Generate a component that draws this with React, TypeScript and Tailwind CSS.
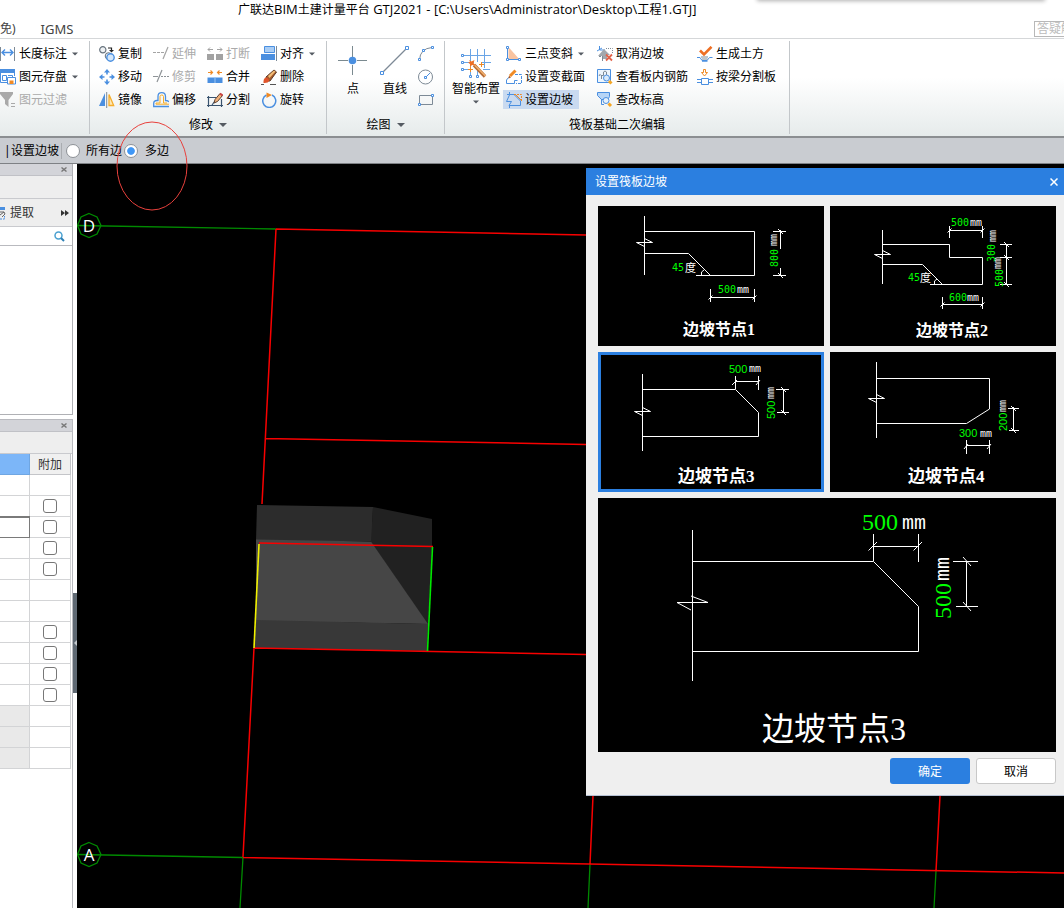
import { useState, type ReactNode } from "react";

const BLUE = "#4a8fe0";
const SLATE = "#7d8a96";
const ORANGE = "#f08a24";

function Icon({ children, size = 16 }: { children: ReactNode; size?: number }) {
  return (
    <svg width={size} height={size} viewBox={`0 0 ${size} ${size}`} fill="none" className="shrink-0" aria-hidden="true">
      {children}
    </svg>
  );
}

function Caret({ small = false }: { small?: boolean }) {
  return (
    <svg width={small ? 6 : 8} height="4" viewBox="0 0 8 4" className="shrink-0" aria-hidden="true">
      <path d="M0 0H8L4 4Z" fill="#555b62" />
    </svg>
  );
}

const icons = {
  dimension: (
    <Icon>
      <path d="M.5 1V15M14.5 1V15" stroke={SLATE} />
      <path d="M2 6.5H13M5 3.5L2 6.5L5 9.5M10 3.5L13 6.5L10 9.5" stroke={BLUE} strokeWidth="1.4" />
    </Icon>
  ),
  store: (
    <Icon>
      <path d="M0 0H15V4H0Z" fill={BLUE} />
      <path d="M.5 3V13.5H7M14.5 3V7M2.5 6.5H6.5V11.5H2.5ZM8 6.5H12.5V8" stroke={BLUE} />
      <path d="M7.5 8.500H15.500V15H7.500Z" fill="#fff" stroke={BLUE} />
      <path d="M9.500 11.500H13.500V15H9.500Z" fill={ORANGE} />
    </Icon>
  ),
  filter: (
    <Icon>
      <path d="M0 0H13V2L8.5 8V15L5 12V8L0 2Z" fill="#a9a9a9" />
      <path d="M11 11.5H15M11 14.5H15" stroke="#a9a9a9" />
    </Icon>
  ),
  copy: (
    <Icon>
      <circle cx="3.8" cy="3.8" r="3.1" stroke="#66727d" strokeWidth="1.2" fill="#eef1f3" />
      <circle cx="9.500" cy="10" r="3.300" stroke="#66727d" fill="#eef1f3" />
      <circle cx="11.500" cy="11.500" r="3.700" stroke={BLUE} strokeWidth="1.400" fill="#d4e7fb" />
      <path d="M9 2H12.5V4" stroke="#222" strokeWidth="1.2" />
      <path d="M10 4H15L12.500 6.500Z" fill="#222" />
    </Icon>
  ),
  move: (
    <Icon>
      <path d="M8 0L11 3.5H5ZM8 16L11 12.5H5ZM0 8L3.5 5V11ZM16 8L12.5 5V11Z" fill={BLUE} />
      <path d="M8 3V5.500M8 10.500V13M3 8H5.500M10.500 8H13" stroke={BLUE} strokeWidth="1.6" />
    </Icon>
  ),
  mirror: (
    <Icon>
      <path d="M6 1V14H0Z" fill={BLUE} />
      <path d="M7.7 0V16" stroke={SLATE} />
      <path d="M10 2.5V13.5H14.7Z" fill="#fde7b5" stroke="#f5ad2b" strokeWidth="1.3" />
    </Icon>
  ),
  extend: (
    <Icon>
      <path d="M0 6.5H3M4 6.5H7M8 6.5H11" stroke="#a4a4a4" />
      <path d="M15 1L10 13" stroke="#a4a4a4" strokeWidth="1.2" />
    </Icon>
  ),
  trim: (
    <Icon>
      <path d="M0 7.5H5M8 7.5H10M11 7.5H13M14 7.5H16" stroke="#8e9397" />
      <path d="M9 1L4 13" stroke="#8e9397" strokeWidth="1.2" />
    </Icon>
  ),
  offset: (
    <Icon>
      <path d="M16 14.5H.7V11.5Q.7 8.500 4 8.500H5V4.5Q5 .7 8.700 .7T12.500 4.500V8.500Q15 8.500 16 10" stroke={BLUE} strokeWidth="1.3" />
      <path d="M16 12.200H3V11H7V4.500Q7 3 8.700 3T10.500 4.500V11H14" stroke="#f5ad2b" />
    </Icon>
  ),
  breakApart: (
    <Icon>
      <path d="M0 8H7V14H0ZM9 8H16V14H9Z" fill="#a2a2a2" />
      <path d="M1 3.500H6M3 1.500L1 3.500L3 5.500M10 3.500H15M13 1.500L15 3.500L13 5.500" stroke="#a2a2a2" />
    </Icon>
  ),
  merge: (
    <Icon>
      <path d="M.5 8.500H15.500V14H.5Z" fill={BLUE} />
      <path d="M8 8V14" stroke="#9cc6f3" />
      <path d="M1 3.500H5.500M3.500 1.500L5.500 3.500L3.500 5.500M15 3.500H10.500M12.500 1.500L10.500 3.500L12.500 5.500" stroke={ORANGE} strokeWidth="1.200" />
    </Icon>
  ),
  split: (
    <Icon>
      <path d="M1.500 4V15M14.500 7V15M0 5.500H9M0 13.500H16M5 13L8 9" stroke="#39536e" strokeWidth="1.200" />
      <path d="M7 11L8 7.500L13 1.500L15.500 3.500L10.500 9.500Z" fill="#f2b27a" stroke="#5a4032" />
      <path d="M13 1.500L15.500 3.500" stroke="#c44" strokeWidth="2" />
    </Icon>
  ),
  align: (
    <Icon>
      <path d="M3.500 .5H13.500V6.500H3.500Z" fill="#a9cdf5" stroke={BLUE} />
      <path d="M0 8H14V14H0Z" fill={BLUE} />
      <path d="M15.500 0V15" stroke={SLATE} />
    </Icon>
  ),
  erase: (
    <Icon>
      <path d="M5 8L13 1L15.500 3L9 12L6 12Z" fill="#a85b2c" stroke="#5c3a26" />
      <path d="M7 7L13 1.500L14.500 2.500L8.500 9Z" fill="#f3bd76" />
      <path d="M2.500 12Q3 8 6 8.500L8.500 11.500Q7 14.500 2.500 14Z" fill="#e0542b" />
      <path d="M0 15.500H3M9 15.500H15" stroke="#555" />
    </Icon>
  ),
  rotate: (
    <Icon>
      <path d="M5.500 3A6.500 6.500 0 1 0 11 3" stroke={BLUE} strokeWidth="1.500" />
      <path d="M5.500 .5L11 3L5.500 6Z" fill={ORANGE} />
    </Icon>
  ),
  arc: (
    <Icon>
      <path d="M1.500 14Q2 2.500 14 1.500" stroke={SLATE} />
      <path d="M.5 12.500H2.500V14.500H.5ZM4.500 3.500H6.500V5.500H4.500ZM13.500 .5H15.500V2.500H13.500Z" fill="#fff" stroke={BLUE} />
    </Icon>
  ),
  circle: (
    <Icon>
      <circle cx="7.500" cy="8" r="7" stroke={SLATE} />
      <path d="M8 8L12 4" stroke={BLUE} />
      <path d="M6.500 7.500H8.500V9.500H6.500Z" fill="#fff" stroke={BLUE} />
    </Icon>
  ),
  rect: (
    <Icon>
      <path d="M1.500 3.500H14.500V12.500H1.500Z" stroke={SLATE} />
      <path d="M.5 11.500H2.500V13.500H.5ZM13.500 2.500H15.500V4.500H13.500Z" fill="#fff" stroke={BLUE} />
    </Icon>
  ),
  slope: (
    <Icon>
      <path d="M2.500 1V13.500H13.500Z" fill="#f9c3a0" />
      <path d="M1.500 2V13.500H14" stroke={BLUE} />
      <path d="M.5 .5H2.500V2.500H.5ZM.5 12.500H2.500V14.500H.5ZM12.500 12.500H14.500V14.500H12.500Z" fill="#fff" stroke={BLUE} />
    </Icon>
  ),
  section: (
    <Icon>
      <path d="M4 8.500H2.500L.5 11V14.500H8.500V11.500H11.500" stroke={BLUE} />
      <path d="M9 5.500H15.500V14.500H10" stroke={BLUE} strokeDasharray="3 1" />
      <path d="M4 7L9.500 1.500" stroke={ORANGE} strokeWidth="3" />
      <path d="M2.500 9.500L3 6.500L5 8.500Z" fill="#b55a1e" />
    </Icon>
  ),
  setSlope: (
    <Icon>
      <path d="M3.500 0V3M1 2.500H8L14.500 9V13.500H3L5.500 9.500H.5L3.500 3M3.500 13V16" stroke={BLUE} />
      <path d="M8 2.500H15.500V9" stroke={ORANGE} strokeDasharray="2 1" />
      <path d="M10 3L15 8" stroke={ORANGE} />
    </Icon>
  ),
  cancelSlope: (
    <Icon>
      <path d="M2.500 0V4H8M0 5L5 2" stroke={BLUE} />
      <path d="M9 2.500H15.500V8" stroke={SLATE} strokeDasharray="1 1" />
      <path d="M7 3L13 9H10V13H5V10H1Z" fill="#a2a8ad" />
      <path d="M2 10.500H4M5.500 10V15" stroke={SLATE} />
      <path d="M9 8.500L15 14.500M15 8.500L9 14.500" stroke="#e2644a" strokeWidth="1.800" />
    </Icon>
  ),
  viewRebar: (
    <Icon>
      <path d="M.5 .5H13.500V13.500H.5Z" fill="#edf5fd" stroke={BLUE} />
      <path d="M2 7Q3 4 4 6.500H6.500V3Q8 1 9.500 3V6M4.500 6V10" stroke={SLATE} />
      <circle cx="9.500" cy="9" r="3" fill="#d9eafb" stroke={BLUE} />
      <path d="M12 12L14.500 14.500" stroke="#f5a623" strokeWidth="3" />
    </Icon>
  ),
  elevation: (
    <Icon>
      <path d="M.5 .5H12.500V4.500L11 7.500H4.500L.5 3.500Z" fill="#b7d5f6" stroke={BLUE} />
      <path d="M4.500 7V12.500H7" stroke={BLUE} />
      <circle cx="9" cy="8.500" r="3" fill="#e6f1fc" stroke={BLUE} />
      <path d="M11.500 11.500L14 14" stroke="#f5a623" strokeWidth="3" />
    </Icon>
  ),
  earthwork: (
    <Icon>
      <path d="M3 4.500L7 8.500L14.500 .8" stroke="#ee6f24" strokeWidth="2.600" />
      <path d="M0 11.500H3L5 14.500H10L12.500 11.500H15.500" stroke={BLUE} />
      <path d="M4 11H11M5 13H10.500" stroke={SLATE} />
      <path d="M5 15H10.500" stroke={BLUE} strokeWidth="1.500" />
    </Icon>
  ),
  splitByBeam: (
    <Icon>
      <path d="M6.500 .5H8.500V3.500H10.500L7.500 7L4.500 3.500H6.500Z" fill="#fff" stroke={ORANGE} />
      <path d="M4.500 9.500H11.500V15.500H4.500ZM0 10.500H4M0 13.500H4M12 10.500H16M12 13.500H16" stroke={BLUE} />
    </Icon>
  ),
};

function Tool({ icon, label, caret, disabled, selected, wide }: {
  icon: ReactNode; label: string; caret?: boolean; disabled?: boolean; selected?: boolean; wide?: boolean;
}) {
  return (
    <button
      type="button"
      disabled={disabled}
      aria-pressed={selected}
      className={`flex h-[19px] items-center gap-[3px] pl-[3px] ${wide ? "pr-[6px]" : "pr-[3px]"} ${disabled ? "text-[#aaaaaa]" : "text-black"} ${selected ? "bg-[#c9daf0]" : ""}`}
    >
      {icon}
      <span className="pt-px">{label}</span>
      {caret && <span className="pl-[2px]"><Caret small /></span>}
    </button>
  );
}

function Column({ children }: { children: ReactNode }) {
  return <div className="flex flex-col items-start gap-1">{children}</div>;
}

function Group({ children, label, caret, className = "" }: { children: ReactNode; label?: string; caret?: boolean; className?: string }) {
  return (
    <section className="my-[2px] flex flex-col border-r border-[#c3c7ca] pt-[3px] whitespace-nowrap">
      <div className={`flex ${className}`}>{children}</div>
      {label && (
        <div className="mt-[6px] flex flex-1 items-center justify-center gap-[6px]">
          {label}
          {caret && <Caret />}
        </div>
      )}
    </section>
  );
}

function Ribbon() {
  return (
    <div className="flex h-[98px] overflow-hidden border-t border-[#d5d7d9] bg-linear-to-b from-white from-40% to-[#e6ebeb]">
      <Group className="w-[89px] shrink-0">
        <div className="-ml-[3px]">
          <Column>
            <Tool icon={icons.dimension} label="长度标注" caret />
            <Tool icon={icons.store} label="图元存盘" caret />
            <Tool icon={icons.filter} label="图元过滤" disabled />
          </Column>
        </div>
      </Group>
      <Group label="修改" caret className="gap-[5px] pr-2 pl-[6px]">
        <Column>
          <Tool icon={icons.copy} label="复制" />
          <Tool icon={icons.move} label="移动" />
          <Tool icon={icons.mirror} label="镜像" />
        </Column>
        <Column>
          <Tool icon={icons.extend} label="延伸" disabled />
          <Tool icon={icons.trim} label="修剪" disabled />
          <Tool icon={icons.offset} label="偏移" />
        </Column>
        <Column>
          <Tool icon={icons.breakApart} label="打断" disabled />
          <Tool icon={icons.merge} label="合并" />
          <Tool icon={icons.split} label="分割" />
        </Column>
        <Column>
          <Tool icon={icons.align} label="对齐" caret />
          <Tool icon={icons.erase} label="删除" />
          <Tool icon={icons.rotate} label="旋转" />
        </Column>
      </Group>
      <Group label="绘图" caret className="pr-[7px] pl-[11px]">
        <button type="button" className="mr-3 flex w-[30px] flex-col items-center gap-[5px] self-start pt-[2px]">
          <Icon size={30}>
            <path d="M14.500 0V11M14.500 19V29M0 14.500H10M19 14.500H29" stroke="#7b8a90" />
            <circle cx="14.500" cy="14.500" r="3.800" fill={BLUE} />
          </Icon>
          点
        </button>
        <button type="button" className="mr-[5px] flex w-[30px] flex-col items-center gap-[5px] self-start pt-[2px]">
          <Icon size={30}>
            <path d="M2.500 26.500L26.500 2.500" stroke={SLATE} strokeWidth="1.200" />
            <path d="M.5 25.500H3.500V28.500H.5ZM25.500 .5H28.500V3.500H25.500Z" fill="#fff" stroke={BLUE} />
          </Icon>
          直线
        </button>
        <Column>
          {[["弧", icons.arc], ["圆", icons.circle], ["矩形", icons.rect]].map(([name, icon]) => (
            <button key={name as string} type="button" aria-label={name as string} className="flex h-[19px] items-center px-[3px]">
              {icon}
            </button>
          ))}
        </Column>
      </Group>
      <Group label="筏板基础二次编辑" className="gap-[3px] pr-[10px] pl-[7px]">
        <button type="button" className="flex w-12 flex-col items-center gap-[3px] self-start pt-1">
          <Icon size={30}>
            <path d="M3 7.500H30M3 14.500H13M20 14.500H30M3 21.500H10M22 21.500H29M9.500 1V13M9.500 17V27M16.500 1V14M16.500 22V27M23.500 1V20" stroke="#6aa5e6" />
            <path d="M.5 6.500H2.500V8.500H.5ZM.5 13.500H2.500V15.500H.5ZM.5 20.500H2.500V22.500H.5ZM8.500 27.500H10.500V29.500H8.500ZM15.500 27.500H17.500V29.500H15.500Z" fill="#fff" stroke={BLUE} />
            <path d="M13 17L24 28.500" stroke="#b46a35" strokeWidth="3.400" />
            <path d="M13.500 17L24.500 28" stroke="#f3b06c" strokeWidth="1.500" />
            <path d="M8 12L10.500 13.500L13.500 12L12.500 15L14.500 17.500L11 17L9 19L9 16L7 14.500L9 14Z" fill="#ee6f24" />
            <path d="M20.500 14V19M18 16.500H23M9.500 19V24M7 21.500H12" stroke={ORANGE} />
          </Icon>
          智能布置
          <Caret small />
        </button>
        <Column>
          <Tool icon={icons.slope} label="三点变斜" caret wide />
          <Tool icon={icons.section} label="设置变截面" wide />
          <Tool icon={icons.setSlope} label="设置边坡" selected wide />
        </Column>
        <Column>
          <Tool icon={icons.cancelSlope} label="取消边坡" />
          <Tool icon={icons.viewRebar} label="查看板内钢筋" />
          <Tool icon={icons.elevation} label="查改标高" />
        </Column>
        <Column>
          <Tool icon={icons.earthwork} label="生成土方" />
          <Tool icon={icons.splitByBeam} label="按梁分割板" />
        </Column>
      </Group>
    </div>
  );
}

const radioClass =
  "m-0 size-[14px] shrink-0 appearance-none rounded-full border border-[#8d9196] bg-white checked:bg-radial checked:from-[#3f97f5] checked:from-40% checked:to-white checked:to-50%";

function OptionsBar() {
  const [mode, setMode] = useState("multi");
  return (
    <div className="relative flex h-7 items-center border-t-2 border-b border-t-[#8b8e91] border-b-[#7e8185] bg-[#c9ccd1] pl-1 whitespace-nowrap">
      <span className="w-[7px]">|</span>
      <span className="border-r border-[#a9acb0] pr-[2px]">设置边坡</span>
      <label className="ml-1 flex items-center gap-[6px]">
        <input type="radio" name="edge-mode" checked={mode === "all"} onChange={() => setMode("all")} className={radioClass} />
        所有边
      </label>
      <label className="ml-[2px] flex items-center gap-[7px]">
        <input type="radio" name="edge-mode" checked={mode === "multi"} onChange={() => setMode("multi")} className={radioClass} />
        多边
      </label>
      <svg className="pointer-events-none absolute -top-[17px] left-[116px] z-10" width="72" height="90" aria-hidden="true">
        <ellipse cx="36" cy="45" rx="35" ry="44" fill="none" stroke="#e8403c" />
      </svg>
    </div>
  );
}

function PanelHeader() {
  return (
    <div className="flex h-3 items-center justify-end border-b border-[#c0c1c6] bg-[#d3d4d9] pr-[5px]">
      <button type="button" aria-label="关闭面板">
        <svg width="6" height="5" viewBox="0 0 6 5" className="block"><path d="M.5 .5L5.500 4.500M5.500 .5L.5 4.500" stroke="#777" strokeWidth="1.400" /></svg>
      </button>
    </div>
  );
}

const rows = [
  { box: false }, { box: true }, { box: true, focus: true }, { box: true }, { box: true }, { box: false }, { box: false },
  { box: true }, { box: true }, { box: true }, { box: true }, { box: false, grey: true }, { box: false, grey: true }, { box: false, grey: true },
] as { box: boolean; focus?: boolean; grey?: boolean }[];

function Sidebar() {
  return (
    <aside className="relative flex w-[77px] shrink-0 flex-col bg-white pr-1">
      <section className="border-r border-b border-[#b0b1b5]">
        <PanelHeader />
        <div className="h-[23px] border-b border-[#c9cace] bg-[#eeeeee]" />
        <div className="flex h-7 items-center justify-between border-b border-[#c9cace] bg-[#eeeeee] pr-[3px]">
          <button type="button" className="flex items-center gap-1 text-[#333]">
            <svg width="6" height="14" viewBox="0 0 6 14" aria-hidden="true">
              <path d="M0 1H5V4H0Z" fill={BLUE} />
              <path d="M0 6H4M0 9L4 6L5 8L2 11" stroke="#666" fill="none" />
              <path d="M0 13H4.500V10" stroke={BLUE} fill="none" strokeDasharray="2 1" />
            </svg>
            <span className="pt-px">提取</span>
          </button>
          <button type="button" aria-label="更多">
            <svg width="8" height="6" viewBox="0 0 8 6"><path d="M0 0L4 3L0 6ZM4 0L8 3L4 6Z" fill="#333" /></svg>
          </button>
        </div>
        <label className="flex h-[19px] items-center border-b border-[#b9babf] pr-[7px]">
          <input type="text" aria-label="搜索构件" className="min-w-0 flex-1 outline-none" />
          <svg width="11" height="11" viewBox="0 0 11 11" fill="none" aria-hidden="true">
            <circle cx="4.500" cy="4.500" r="3.500" stroke="#4aa0d0" strokeWidth="1.500" />
            <path d="M7 7L10 10" stroke="#2d80b5" strokeWidth="2" />
          </svg>
        </label>
        <div className="h-[168px]" />
      </section>
      <section className="mt-1 flex-1 border-t border-r border-[#b9babf]">
        <PanelHeader />
        <div className="h-[22px] border-b border-[#c9cace] bg-[#eeeeee]" />
        <table className="w-[71px] table-fixed border-separate border-spacing-0">
          <thead>
            <tr className="h-[21px]">
              <th aria-label="属性值" className="w-[30px] border-r border-b border-[#6fa6e2] bg-[#7cb6f8] p-0" />
              <th className="border-r border-b border-[#c4c5c9] bg-[#f0f0f0] p-0 pt-px text-center font-normal text-[#333]">附加</th>
            </tr>
          </thead>
          <tbody>
            {rows.map((r, i) => (
              <tr key={i} className="h-[21px]">
                <td className={`border-r border-b p-0 ${r.grey ? "bg-[#e9e9e9]" : ""} ${r.focus ? "border-[#7a7a7a] shadow-[inset_0_1px_#7a7a7a,0_-1px_#7a7a7a]" : "border-[#d3d4d6]"}`} />
                <td className="border-r border-b border-[#d3d4d6] p-0">
                  {r.box && (
                    <input
                      type="checkbox"
                      aria-label={`附加 ${i + 1}`}
                      className="mx-auto block size-[14px] appearance-none rounded-[3px] border border-[#777777] bg-white checked:bg-[#7cb6f8]"
                    />
                  )}
                </td>
              </tr>
            ))}
          </tbody>
        </table>
      </section>
      <button type="button" aria-label="折叠侧栏" className="absolute top-[429px] right-0 flex h-[100px] w-1 items-center justify-end bg-[#5f6973]">
        <svg width="3" height="6" viewBox="0 0 3 6"><path d="M3 0V6L0 3Z" fill="#c5cacf" /></svg>
      </button>
    </aside>
  );
}

function ModelView() {
  return (
    <svg className="absolute inset-0 h-full w-full" fill="none" role="img" aria-label="模型视图">
      <g transform="translate(-77 -164)">
        <g stroke="#008a00" strokeWidth="1.300">
          <path d="M78 225.500L276 229M78 854.500L243 857.500M243 857L240 908M590 864L588 908M936 871L934 908" />
          <path d="M89 213.500L97 217L101 225.500L97 234L89 237.500L81 234L77.500 225.500L81 217Z" />
          <path d="M89 842.500L97 846L101 854.500L97 863L89 866.500L81 863L77.500 854.500L81 846Z" />
        </g>
        <path d="M257 505L373 507L372 541L256 541Z" fill="#2c2c2c" />
        <path d="M373 507L432 519L432 547L428 625L371 542Z" fill="#212121" />
        <path d="M256 539.500L371 541.500L428 624L256 621Z" fill="#464646" />
        <path d="M256 620L428 624L427 651L254 648Z" fill="#383838" />
        <g stroke="#f80000" strokeWidth="1.500">
          <path d="M276 229L586 235M276 229L262 504M254 648L243 857M265 438.500L586 444.500M254 648L586 654.500M243 857.500L1064 873M593 796L590 864M940 796L936 871M259 543L433 546.500" />
        </g>
        <path d="M259 544L254 648" stroke="#f0f000" strokeWidth="1.600" />
        <path d="M432.500 547L427.500 651" stroke="#00e800" strokeWidth="1.600" />
        <g fill="#fff" fontSize="17" fontFamily="'Open Sans', sans-serif" textAnchor="middle">
          <text x="89" y="232">D</text>
          <text x="89" y="861">A</text>
        </g>
      </g>
    </svg>
  );
}

type Dim = { x: number; y: number; value: string; ux: number; uy: number; unit?: string; vertical?: boolean };
type Drawing = {
  title: string; tx: number; ty: number; x: number; y: number; lines: string; breakAt: [number, number]; dims: Dim[]; mono?: boolean;
};

const drawings: Drawing[] = [
  {
    title: "边坡节点1", tx: 683, ty: 335, x: 598, y: 206, breakAt: [644.5, 242.5], mono: true,
    lines: "M644.5 216V275M644.5 231.5H754.5V275.5H696M644.5 253.5H688.5L710.5 275.5M701.5 275V272L704 270M710.5 289V302M754.5 289V302M710.5 297.500H754.5M708.5 299.500L712.5 295.500M752.5 299.500L756.500 295.500M773 231.500H786M773 275.500H786M780.500 230V249M780.500 268V276M778 229L783 234M778 273L783 278",
    dims: [
      { x: 672, y: 271, value: "45", ux: 685, uy: 272, unit: "度" },
      { x: 718, y: 293, value: "500", ux: 737, uy: 293 },
      { x: 778, y: 267, value: "800", ux: 777, uy: 246, vertical: true },
    ],
  },
  {
    title: "边坡节点2", tx: 916, ty: 336, x: 830, y: 206, breakAt: [882.5, 254.5], mono: true,
    lines: "M882.5 230V284M882.5 244.5H949.5V257.5H982.5V284.5H930M882.5 264.5H922.5L942.5 284.5M934.500 284V281L937 279M949.5 226V238M982.5 226V238M949.5 230.5H982.5M947.500 232.500L951.500 228.500M980.500 232.500L984.500 228.500M942.500 297V309M982.500 297V309M942.500 304.500H982.500M940.500 306.500L944.500 302.500M980.500 306.500L984.500 302.500M1000 244.500H1012M1000 257.500H1012M1000 284.500H1012M1006.500 244V285M1004 242L1009 247M1004 255L1009 260M1004 282L1009 287",
    dims: [
      { x: 908, y: 281, value: "45", ux: 920, uy: 282, unit: "度" },
      { x: 951, y: 226, value: "500", ux: 970, uy: 226 },
      { x: 949, y: 301, value: "600", ux: 967, uy: 301 },
      { x: 995, y: 262, value: "300", ux: 996, uy: 242, vertical: true },
      { x: 1003, y: 287, value: "500", ux: 1001, uy: 269, vertical: true },
    ],
  },
  {
    title: "边坡节点3", tx: 678, ty: 482, x: 598, y: 352, breakAt: [642.5, 411.5],
    lines: "M642.5 374V451M642.5 389.5H735.5L758.5 412.5V436.5H642.5M735.5 376V389M758.5 376V390M735.5 381.5H758.5M732 385L737 380M756 385L760 380M776 389.5H789M777 412.5H789M783.5 389V413M781 387L786 392M781 410L786 415",
    dims: [
      { x: 729, y: 373, value: "500", ux: 749, uy: 372 },
      { x: 775, y: 419, value: "500", ux: 774, uy: 399, vertical: true },
    ],
  },
  {
    title: "边坡节点4", tx: 908, ty: 482, x: 830, y: 352, breakAt: [876.5, 398.5],
    lines: "M876.5 362V438M876.5 378.5H989.5V409L966.5 423.5H876.5M966.5 440V454M989.5 440V454M966.5 445.5H989.5M964 449L968 444M987 449L991 444M1008 408.500H1019M1009 430.500H1019M1013.500 407V431M1011 406L1016 411M1011 428L1016 433",
    dims: [
      { x: 959, y: 437, value: "300", ux: 980, uy: 437 },
      { x: 1007, y: 431, value: "200", ux: 1006, uy: 412, vertical: true },
    ],
  },
];

function Label({ x, y, vertical, children, ...rest }: { x: number; y: number; vertical?: boolean; children: ReactNode; fill: string; fontSize: number; fontFamily: string }) {
  return <text transform={vertical ? `translate(${x} ${y}) rotate(-90)` : `translate(${x} ${y})`} {...rest}>{children}</text>;
}

function Thumbnail({ d, selected, onSelect }: { d: Drawing; selected: boolean; onSelect: () => void }) {
  const [bx, by] = d.breakAt;
  return (
    <button
      type="button"
      aria-pressed={selected}
      onClick={onSelect}
      className={`flex h-[140px] items-center justify-center bg-black ${selected ? "outline-3 -outline-offset-3 outline-[#2b7fe0]" : ""}`}
    >
      <svg width="226" height="140" viewBox={`${d.x} ${d.y} 226 140`} fill="none">
        <path d={d.lines} stroke="#fff" />
        <path d={`M${bx - 8} ${by}H${bx + 8}L${bx} ${by - 4}M${bx - 8} ${by}L${bx} ${by + 4}`} stroke="#fff" />
        {d.dims.map((m, i) => (
          <g key={i}>
            <Label x={m.x} y={m.y} vertical={m.vertical} fill="#00ff00" fontSize={d.mono ? 10 : 11} fontFamily={d.mono ? "'DejaVu Sans Mono', monospace" : "'Liberation Sans', sans-serif"}>{m.value}</Label>
            <Label x={m.ux} y={m.uy} vertical={m.vertical} fill="#fff" fontSize={m.unit ? 11 : 10} fontFamily="'Liberation Mono', 'Noto Sans CJK SC', monospace">{m.unit ?? "mm"}</Label>
          </g>
        ))}
        <text x={d.tx} y={d.ty} fill="#fff" fontSize={d.mono ? 16 : 17} fontWeight="700" fontFamily="'Liberation Serif', 'Noto Sans CJK SC', serif">{d.title}</text>
      </svg>
    </button>
  );
}

function Preview() {
  return (
    <div className="col-span-2 flex h-[254px] justify-center bg-black">
      <svg width="458" height="254" viewBox="598 498 458 254" fill="none" role="img" aria-label="边坡节点3 预览">
        <path
          d="M692.5 530V681M692.5 561.5H873.5L918.5 606.5V651.5H692.5M873.5 534V561M918.5 534V562M873.5 546.5H918.5M868.500 550.500L877 542M913.500 550.500L922 542M953 561.500H978M956 606.500H978M966.500 561V607M963 557L971 566M963 602L971 611M677 602.500H708L691 596M677 602.500L691 610"
          stroke="#fff"
        />
        <Label x={862} y={530} fill="#00ff00" fontSize={24} fontFamily="'Liberation Serif', serif">500</Label>
        <Label x={902} y={529} fill="#fff" fontSize={20} fontFamily="'Liberation Mono', monospace">mm</Label>
        <Label x={951} y={619} vertical fill="#00ff00" fontSize={24} fontFamily="'Liberation Serif', serif">500</Label>
        <Label x={949} y={581} vertical fill="#fff" fontSize={20} fontFamily="'Liberation Mono', monospace">mm</Label>
        <text x="762" y="740" fill="#fff" fontSize="32" fontFamily="'Liberation Serif', 'Noto Sans CJK SC', serif">边坡节点3</text>
      </svg>
    </div>
  );
}

function SlopeDialog() {
  const [selected, setSelected] = useState(2);
  return (
    <div role="dialog" aria-label="设置筏板边坡" className="absolute top-1 right-0 w-[478px] border-b border-[#b4bfd2] bg-[#efefef]">
      <header className="flex h-[27px] items-center justify-between bg-[#2b7fe0] pr-[6px] pl-[9px] text-white">
        <h2>设置筏板边坡</h2>
        <button type="button" aria-label="关闭">
          <svg width="8" height="8" viewBox="0 0 8 8" className="block"><path d="M.5 .5L7.500 7.500M7.500 .5L.5 7.500" stroke="#fff" strokeWidth="1.500" /></svg>
        </button>
      </header>
      <div className="grid grid-cols-2 gap-[6px] pt-[11px] pr-2 pl-3">
        {drawings.map((d, i) => (
          <Thumbnail key={d.title} d={d} selected={i === selected} onSelect={() => setSelected(i)} />
        ))}
        <Preview />
      </div>
      <footer className="flex justify-end gap-[6px] pt-[6px] pr-2 pb-[11px]">
        <button type="button" className="h-[26px] w-20 rounded-[3px] bg-[#2b7fe0] pt-px text-white">确定</button>
        <button type="button" className="h-[26px] w-20 rounded-[3px] border border-[#c8c8c8] bg-white pt-px text-black">取消</button>
      </footer>
    </div>
  );
}

export default function App() {
  return (
    <div className="flex min-h-screen flex-col overflow-hidden bg-white font-['Noto_Sans','Noto_Sans_CJK_SC',sans-serif] text-[12px] leading-[16px] text-black">
      <header className="relative h-5 overflow-hidden pt-px pl-[238px]">
        <h1 className="font-['Open_Sans','Noto_Sans_CJK_SC',sans-serif] whitespace-nowrap">
          广联达<span className="text-[13px]">BIM</span>土建计量平台
          <span className="text-[13px]"> GTJ2021 - [C:\Users\Administrator\Desktop\</span>工程<span className="text-[13px]">1.GTJ]</span>
        </h1>
        <div className="absolute -top-1 right-5 h-1 w-[286px] shadow-[0_0_4px_1px_#b0b0b0]" />
      </header>
      <nav className="flex h-[18px] items-center text-[13px] text-[#444]">
        <a href="#home" className="text-[12px]">免)</a>
        <a href="#igms" className="ml-[25px]">IGMS</a>
        <input
          type="text"
          aria-label="答疑解惑"
          placeholder="答疑解"
          className="ml-auto h-4 w-[30px] border border-r-0 border-[#b8b8b8] pl-[2px] text-[12px] placeholder:text-[#bbbbbb]"
        />
      </nav>
      <Ribbon />
      <OptionsBar />
      <main className="flex flex-1">
        <Sidebar />
        <div className="relative min-h-[744px] flex-1 overflow-hidden bg-black">
          <ModelView />
          <SlopeDialog />
        </div>
      </main>
    </div>
  );
}
